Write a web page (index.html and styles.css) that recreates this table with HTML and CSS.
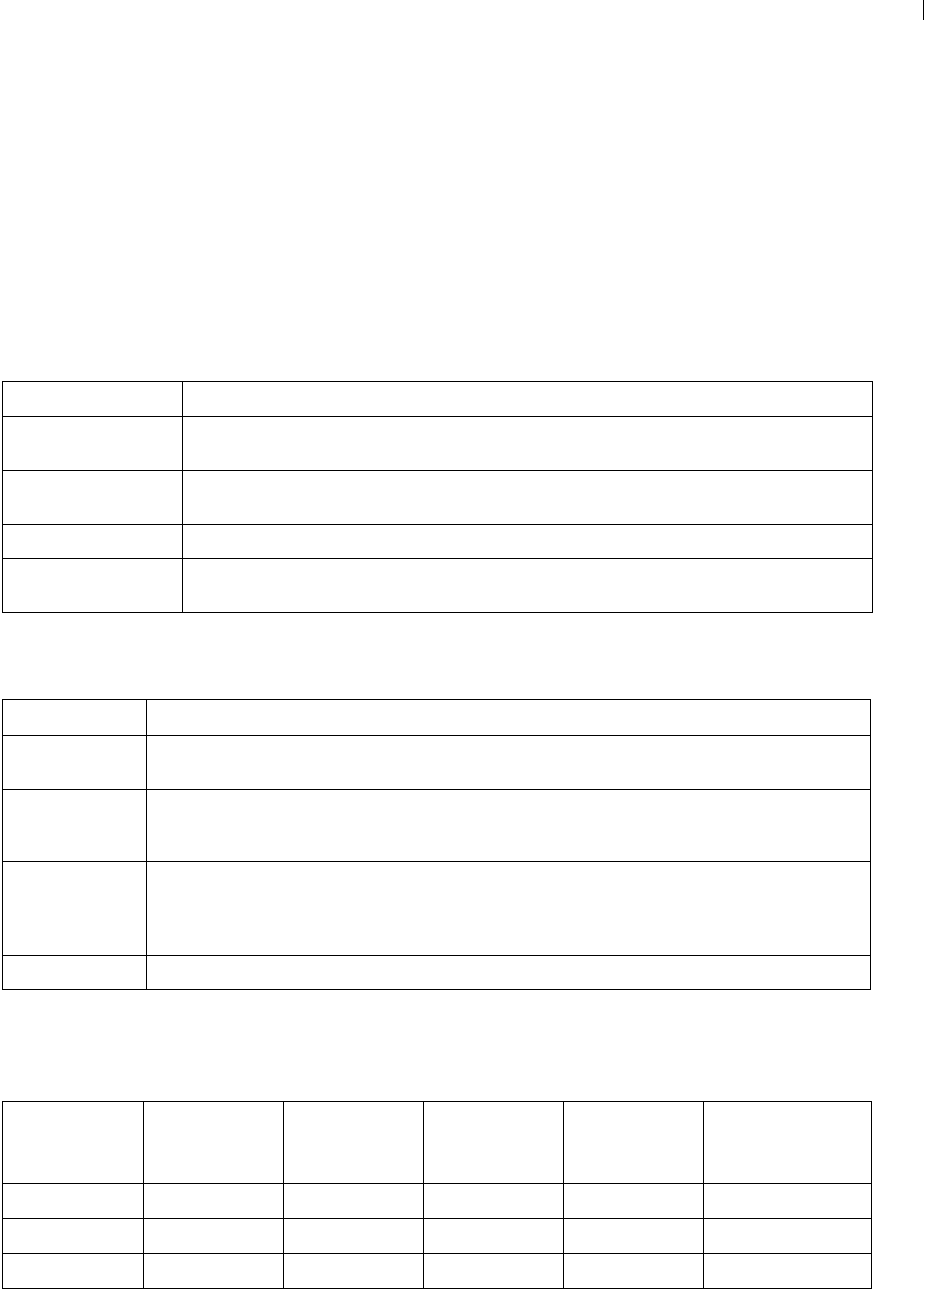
FILE: index.html
```html
<!DOCTYPE html>
<html lang="en">
<head>
<meta charset="utf-8">
<title>Tables</title>
<link rel="stylesheet" href="styles.css">
</head>
<body>
<div class="edge-mark"></div>
<main class="page">
  <div class="grid grid-one">
    <div class="cell"></div><div class="cell"></div>
    <div class="cell"></div><div class="cell"></div>
    <div class="cell"></div><div class="cell"></div>
    <div class="cell"></div><div class="cell"></div>
    <div class="cell"></div><div class="cell"></div>
  </div>
  <div class="grid grid-two">
    <div class="cell"></div><div class="cell"></div>
    <div class="cell"></div><div class="cell"></div>
    <div class="cell"></div><div class="cell"></div>
    <div class="cell"></div><div class="cell"></div>
    <div class="cell"></div><div class="cell"></div>
  </div>
  <div class="grid grid-three">
    <div class="cell"></div><div class="cell"></div><div class="cell"></div><div class="cell"></div><div class="cell"></div><div class="cell"></div>
    <div class="cell"></div><div class="cell"></div><div class="cell"></div><div class="cell"></div><div class="cell"></div><div class="cell"></div>
    <div class="cell"></div><div class="cell"></div><div class="cell"></div><div class="cell"></div><div class="cell"></div><div class="cell"></div>
    <div class="cell"></div><div class="cell"></div><div class="cell"></div><div class="cell"></div><div class="cell"></div><div class="cell"></div>
  </div>
</main>
</body>
</html>
```

FILE: styles.css
```css
html, body {
  margin: 0;
  padding: 0;
  background: #ffffff;
  font-family: "Liberation Serif", serif;
}

.edge-mark {
  position: absolute;
  left: 923px;
  top: 0;
  width: 1px;
  height: 20px;
  background: #000000;
}

.page {
  display: flex;
  flex-direction: column;
  align-items: flex-start;
  padding: 381px 0 0 2px;
}

.grid {
  display: grid;
  border-top: 1px solid #000000;
  border-left: 1px solid #000000;
}

.cell {
  box-sizing: border-box;
  border-right: 1px solid #000000;
  border-bottom: 1px solid #000000;
}

.grid-one {
  grid-template-columns: 180px 690px;
  grid-template-rows: 35px 54px 54px 34px 54px;
}

.grid-two {
  margin-top: 86px;
  grid-template-columns: 144px 724px;
  grid-template-rows: 36px 54px 72px 94px 34px;
}

.grid-three {
  margin-top: 111px;
  grid-template-columns: 141px 140px 140px 140px 140px 168px;
  grid-template-rows: 82px 35px 35px 35px;
}
```
